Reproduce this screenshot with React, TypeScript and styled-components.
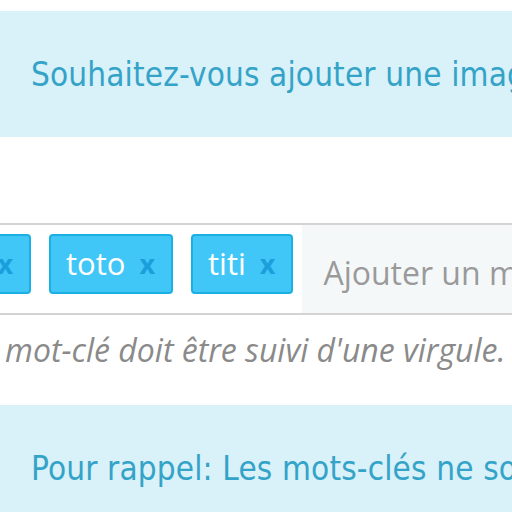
import React from "react";
import styled, { createGlobalStyle } from "styled-components";

const Global = createGlobalStyle`
  html, body { margin: 0; padding: 0; background: #ffffff; }
  body { width: 512px; height: 512px; overflow: hidden; }
`;

const Page = styled.div`
  width: 512px;
  height: 512px;
  overflow: hidden;
  padding-top: 11px;
  box-sizing: border-box;
  display: flex;
  flex-direction: column;
`;

const Alert = styled.div<{ $gap?: number }>`
  flex: none;
  height: 126px;
  margin-top: ${(p) => p.$gap ?? 0}px;
  background: #d9f1f9;
  display: flex;
  align-items: center;
  padding-left: 31px;
  box-sizing: border-box;
  white-space: nowrap;
  color: #34a3c8;
  font-family: "DejaVu Sans Condensed", "Liberation Sans Narrow", sans-serif;
  font-size: 33px;
  letter-spacing: 0.15px;
`;

const Field = styled.div`
  flex: none;
  margin-top: 86px;
  display: flex;
  align-items: stretch;
  height: 92px;
  box-sizing: border-box;
  border-top: 2px solid #d3d3d3;
  border-bottom: 2px solid #d3d3d3;
  white-space: nowrap;
`;

const TagList = styled.div`
  flex: none;
  display: flex;
  align-items: flex-start;
  gap: 18px;
  padding-top: 9px;
  margin-left: 31px;
`;

/* zero-width slot whose content overflows to the left edge of the page */
const LeftOverflow = styled.span`
  flex: none;
  width: 0;
  display: flex;
  justify-content: flex-end;
  white-space: nowrap;
`;

const Tag = styled.span`
  flex: none;
  display: inline-flex;
  align-items: center;
  gap: 14px;
  height: 60px;
  box-sizing: border-box;
  padding: 0 16px 2px 15px;
  background: #40c7f7;
  border: 2px solid #1bb0e3;
  border-radius: 4px;
  color: #ffffff;
  font-family: "Open Sans", sans-serif;
  font-size: 31px;
`;

const Remove = styled.span`
  color: #1a9fdc;
  font-family: "Open Sans", sans-serif;
  font-weight: 700;
  font-size: 27px;
`;

const Input = styled.div`
  flex: 1;
  margin-left: 9px;
  background: #f5f8f9;
  display: flex;
  align-items: center;
  padding-left: 21px;
  padding-top: 6px;
  color: #9a9a9a;
  font-family: "Open Sans", sans-serif;
  font-size: 32px;
`;

const Help = styled.div`
  flex: none;
  display: flex;
  margin-top: 14px;
  height: 42px;
  line-height: 42px;
  padding-left: 5px;
  white-space: nowrap;
  color: #8a8a8a;
  font-family: "Open Sans", sans-serif;
  font-style: italic;
  font-size: 32px;
`;

export default function App() {
  return (
    <>
      <Global />
      <Page>
        <Alert>Souhaitez-vous ajouter une image ?</Alert>
        <Field>
          <TagList>
            <LeftOverflow>
              <Tag>
                tata <Remove>x</Remove>
              </Tag>
            </LeftOverflow>
            <Tag>
              toto <Remove>x</Remove>
            </Tag>
            <Tag>
              titi <Remove>x</Remove>
            </Tag>
          </TagList>
          <Input>Ajouter un mot-clé</Input>
        </Field>
        <Help>
          <LeftOverflow>Chaque&nbsp;</LeftOverflow>
          <span>mot-clé doit être suivi d'une virgule.</span>
        </Help>
        <Alert $gap={34}>Pour rappel: Les mots-clés ne sont pas sensibles à la casse.</Alert>
      </Page>
    </>
  );
}
